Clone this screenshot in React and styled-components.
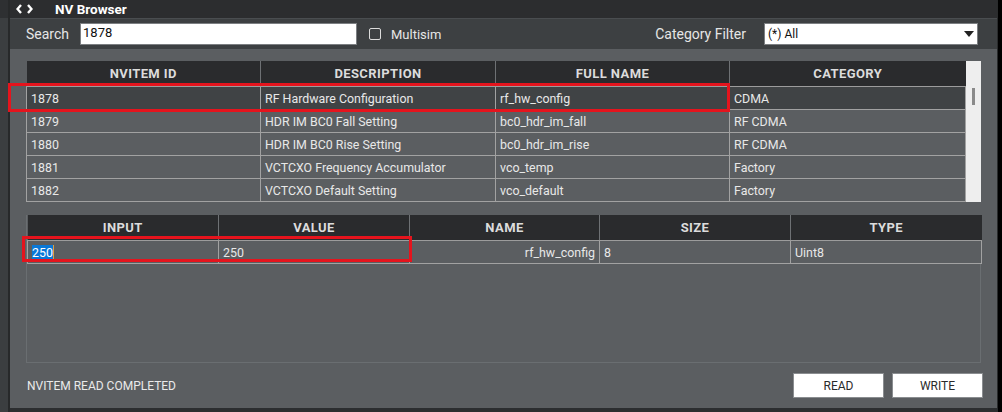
import React from "react";
import styled, { createGlobalStyle } from "styled-components";

const GlobalStyle = createGlobalStyle`
  html, body {
    margin: 0;
    padding: 0;
    background: #111;
  }
  body {
    font-family: Roboto, "Liberation Sans", sans-serif;
  }
`;

const Screen = styled.div`
  display: flex;
  width: 1002px;
  height: 412px;
  overflow: hidden;
  background: #000;
`;

const LeftStrip = styled.div`
  width: 8px;
  background: linear-gradient(#2e3032 0 18px, #3b3e40 18px);
  border-right: 2px solid #27292a;
`;

const Window = styled.div`
  flex: 1;
  display: flex;
  flex-direction: column;
  background: #5b5e61;
  border-right: 1px solid #2a2c2d;
  margin-right: 4px;
  border-bottom: 4px solid #2c2e30;
`;

const TitleBar = styled.div`
  height: 18px;
  display: flex;
  align-items: center;
  background: #2c2d2f;
  border-bottom: 1px solid #4a4d50;
  color: #fff;
  font-size: 13.5px;
  font-weight: 700;
`;

const TitleIcon = styled.svg`
  margin: 0 22px 0 6px;
`;

const Toolbar = styled.div`
  height: 30px;
  display: flex;
  align-items: center;
  background: #3d4042;
  padding: 0 19px 0 16px;
  color: #e6e6e6;
  font-size: 14px;
`;

const Label = styled.span`
  font-size: ${(p) => p.size || 14}px;
  margin-right: ${(p) => p.gap || 0}px;
`;

const TextInput = styled.div`
  width: 273px;
  height: 20px;
  background: #fff;
  border: 1px solid #7c7f82;
  color: #111;
  font-size: 13px;
  padding-left: 2px;
  line-height: 17px;
  box-sizing: content-box;
`;

const Check = styled.span`
  width: 10px;
  height: 10px;
  border: 1.5px solid #dcdcdc;
  border-radius: 2px;
  margin: 0 10px 0 12px;
`;

const Spacer = styled.div`
  flex: 1;
`;

const Select = styled.div`
  box-sizing: border-box;
  width: 214px;
  height: 22px;
  background: #fff;
  border: 1px solid #7c7f82;
  color: #111;
  font-size: 12px;
  display: flex;
  align-items: center;
  justify-content: space-between;
  padding: 0 2px 0 3px;
`;

const Arrow = styled.span`
  width: 0;
  height: 0;
  border-left: 5px solid transparent;
  border-right: 5px solid transparent;
  border-top: 6px solid #222;
  margin-right: 1px;
`;

const Content = styled.div`
  flex: 1;
  display: flex;
  flex-direction: column;
  padding: 12px 16px 0 16px;
`;

const ListWrap = styled.div`
  position: relative;
  display: flex;
  height: 141px;
  width: 955px;
`;

const Table = styled.table`
  border-collapse: collapse;
  table-layout: fixed;
  width: ${(p) => p.w}px;
  font-size: 12.4px;
  color: #e8e8e8;
`;

const Th = styled.th`
  height: 25px;
  padding: 0;
  background: #2a2b2d;
  color: #dcdcdc;
  font-weight: 700;
  font-size: 13px;
  letter-spacing: 0.4px;
  text-align: center;
  border-right: 1px solid #6e7174;
  border-bottom: 1px solid #9c9c9c;
  &:last-child {
    border-right: none;
  }
`;

const Tr = styled.tr`
  background: ${(p) => (p.selected ? "#404345" : "#5b5e61")};
`;

const Td = styled.td`
  height: 22px;
  padding: 0 4px;
  border: 1px solid #a2a2a2;
  border-top: none;
  white-space: nowrap;
  overflow: hidden;
  text-align: ${(p) => p.align || "left"};
`;

const Scrollbar = styled.div`
  width: 16px;
  background: #eeeeee;
  display: flex;
  justify-content: center;
  padding-top: 27px;
`;

const Thumb = styled.span`
  width: 3px;
  height: 17px;
  background: #8a8a8a;
`;

// red annotation frames drawn over the grids
const Highlight = styled.div`
  position: absolute;
  left: ${(p) => p.x}px;
  top: ${(p) => p.y}px;
  width: ${(p) => p.w}px;
  height: ${(p) => p.h}px;
  border: 3px solid #e5141d;
  box-sizing: border-box;
  pointer-events: none;
`;

const DetailBox = styled.div`
  position: relative;
  margin-top: 13px;
  width: 953px;
  height: 147px;
  border: 1px solid #6a6e71;
  border-top: none;
`;

const Selected = styled.span`
  background: #0a78d7;
  color: #fff;
  border-right: 1px solid #e0a040;
`;

const StatusRow = styled.div`
  flex: 1;
  display: flex;
  align-items: center;
  justify-content: space-between;
  padding: 0 0 0 1px;
  margin-right: -2px;
  color: #eaeaea;
  font-size: 12px;
`;

const Buttons = styled.div`
  display: flex;
  gap: 8px;
`;

const Button = styled.button`
  width: 91px;
  height: 25px;
  background: #fff;
  border: 1px solid #8a8d90;
  color: #2a2a2a;
  font-family: Roboto, "Liberation Sans", sans-serif;
  font-size: 12px;
  padding: 0;
`;

const rows = [
  ["1878", "RF Hardware Configuration", "rf_hw_config", "CDMA"],
  ["1879", "HDR IM BC0 Fall Setting", "bc0_hdr_im_fall", "RF CDMA"],
  ["1880", "HDR IM BC0 Rise Setting", "bc0_hdr_im_rise", "RF CDMA"],
  ["1881", "VCTCXO Frequency Accumulator", "vco_temp", "Factory"],
  ["1882", "VCTCXO Default Setting", "vco_default", "Factory"],
];

export default function App() {
  return (
    <>
      <GlobalStyle />
      <Screen>
        <LeftStrip />
        <Window>
          <TitleBar>
            <TitleIcon width="17" height="10" viewBox="0 0 17 10">
              <path
                d="M5 1 L1.5 5 L5 9 M12 1 L15.5 5 L12 9"
                fill="none"
                stroke="#fff"
                strokeWidth="2.4"
              />
            </TitleIcon>
            NV Browser
          </TitleBar>
          <Toolbar>
            <Label gap={11}>Search</Label>
            <TextInput>1878</TextInput>
            <Check />
            <Label size={13}>Multisim</Label>
            <Spacer />
            <Label gap={18}>Category Filter</Label>
            <Select>
              (*) All
              <Arrow />
            </Select>
          </Toolbar>
          <Content>
            <ListWrap>
              <Table w={939}>
                <colgroup>
                  <col width="234" />
                  <col width="235" />
                  <col width="234" />
                  <col width="236" />
                </colgroup>
                <thead>
                  <tr>
                    <Th>NVITEM ID</Th>
                    <Th>DESCRIPTION</Th>
                    <Th>FULL NAME</Th>
                    <Th>CATEGORY</Th>
                  </tr>
                </thead>
                <tbody>
                  {rows.map((r, i) => (
                    <Tr key={r[0]} selected={i === 0}>
                      {r.map((c) => (
                        <Td key={c}>{c}</Td>
                      ))}
                    </Tr>
                  ))}
                </tbody>
              </Table>
              <Scrollbar>
                <Thumb />
              </Scrollbar>
              <Highlight x={-18} y={22} w={722} h={29} />
            </ListWrap>
            <DetailBox>
              <Table w={954}>
                <colgroup>
                  <col width="191" />
                  <col width="191" />
                  <col width="190" />
                  <col width="191" />
                  <col width="191" />
                </colgroup>
                <thead>
                  <tr>
                    <Th>INPUT</Th>
                    <Th>VALUE</Th>
                    <Th>NAME</Th>
                    <Th>SIZE</Th>
                    <Th>TYPE</Th>
                  </tr>
                </thead>
                <tbody>
                  <Tr>
                    <Td>
                      <Selected>250</Selected>
                    </Td>
                    <Td>250</Td>
                    <Td align="right">rf_hw_config</Td>
                    <Td>8</Td>
                    <Td>Uint8</Td>
                  </Tr>
                </tbody>
              </Table>
              <Highlight x={-5} y={21} w={390} h={26} />
            </DetailBox>
            <StatusRow>
              NVITEM READ COMPLETED
              <Buttons>
                <Button>READ</Button>
                <Button>WRITE</Button>
              </Buttons>
            </StatusRow>
          </Content>
        </Window>
      </Screen>
    </>
  );
}
